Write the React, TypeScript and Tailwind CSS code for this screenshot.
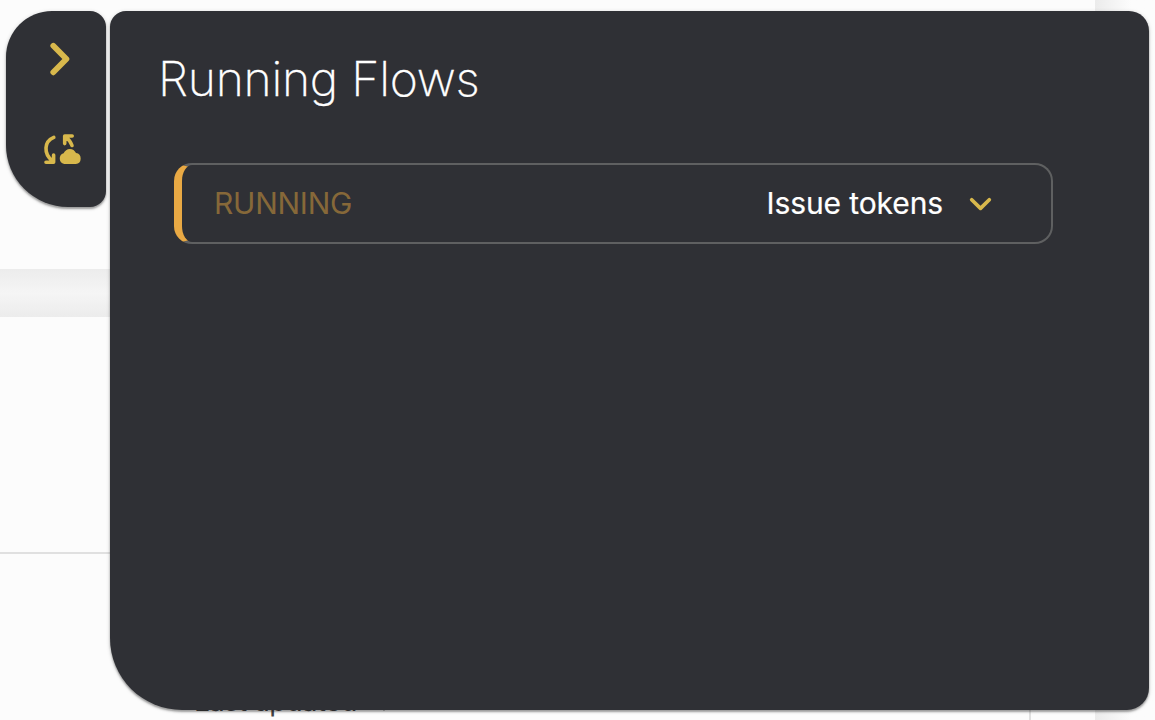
export default function App() {
  return (
    <div className="relative flex h-[720px] w-[1155px] overflow-hidden bg-[#fcfcfc] font-['Inter',sans-serif]">
      <div className="absolute inset-0 flex">
        <div className="flex w-[1095px] flex-col">
          <div className="h-[269px] shrink-0" />
          <div className="h-12 shrink-0 bg-linear-to-b from-[#ececec] via-[#f5f5f5] to-[#ececec]" />
          <div className="h-[237px] shrink-0 border-b-2 border-[#e0e0e0]" />
          <div className="flex flex-1">
            <div className="flex w-[1031px] items-end border-r-2 border-[#e0e0e0] pl-[194px]">
              <span className="flex h-[37px] items-start gap-[18px] text-[28px] leading-9 tracking-[-0.8px] text-[#444]">
                Last updated
                <svg className="mt-[9px]" width="20" height="24" viewBox="0 0 20 24" fill="none" stroke="#444" strokeWidth="2.5"><path d="M9 1V17M2 10l7 7 7-7" /></svg>
              </span>
            </div>
          </div>
        </div>
        <div className="w-[60px] bg-linear-to-r from-[#ebebeb] to-[#fcfcfc] to-60%" />
      </div>

      <div className="relative flex gap-1 pt-[11px] pl-1.5">
        <div className="flex h-[196px] w-[100px] flex-col items-center rounded-tl-[46px] rounded-tr-2xl rounded-br-2xl rounded-bl-[62px] bg-[#2f3035] pt-[30px] pl-3.5 shadow-[0_1px_4px_rgba(0,0,0,0.18),0_2px_2px_rgba(0,0,0,0.3)]">
          <svg className="mr-1" width="24" height="36" viewBox="0 0 24 36" fill="none" stroke="#d8b84c" strokeWidth="5.8" strokeLinecap="round" strokeLinejoin="round">
            <path d="M4.3 4.8L17.4 18L4.3 31.3" />
          </svg>
          <svg className="mt-[53px]" width="46" height="38" viewBox="0 0 46 38" fill="none">
            <path d="M13.8 7.4C4 11.5 3.3 23.5 12.4 31M6 32.2H13.6V25" stroke="#d8b84c" strokeWidth="3.6" strokeLinecap="round" strokeLinejoin="round" />
            <path d="M32.2 6H24.7V13.6M25.6 6.8C28.8 9.3 30.8 12 32 15.5" stroke="#d8b84c" strokeWidth="3.6" strokeLinecap="round" strokeLinejoin="round" />
            <path d="M24.2 34A5.6 5.6 0 0 1 23.6 23.2C25 20.7 27 19 29.8 19C32.6 19 34.9 20.6 36 23.1A5.5 5.5 0 0 1 35.8 34Z" fill="#d8b84c" />
          </svg>
        </div>

        <main className="flex h-[699px] w-[1039px] flex-col rounded-tl-[16px] rounded-tr-[20px] rounded-br-[22px] rounded-bl-[72px] bg-[#2f3035] pt-[38px] pr-24 pl-12 shadow-[0_1px_4px_rgba(0,0,0,0.18),0_2px_2px_rgba(0,0,0,0.3)]">
          <h1 className="h-[60px] text-[48px] leading-[60px] font-extralight tracking-[-0.25px] whitespace-nowrap text-white [-webkit-text-stroke:0.3px_white]">Running Flows</h1>
          <div className="mt-[54px] ml-4 flex h-[81px] items-center justify-between rounded-[18px] border-2 border-l-8 border-[#5f6061] border-l-[#e9a944] pr-[58px] pb-0.5 pl-8 text-[30px] leading-9">
            <span className="tracking-[-0.25px] text-[#866839]">RUNNING</span>
            <div className="flex items-center gap-[25px] text-white">
              <span className="tracking-[-0.1px] [-webkit-text-stroke:0.2px_white]">Issue tokens</span>
              <svg width="25" height="18" viewBox="0 0 25 18" fill="none" stroke="#d8b84c" strokeWidth="3.7" strokeLinecap="round" strokeLinejoin="round">
                <path d="M3.7 5.7L12.5 14.4L21.3 5.7" />
              </svg>
            </div>
          </div>
        </main>
      </div>
    </div>
  );
}
